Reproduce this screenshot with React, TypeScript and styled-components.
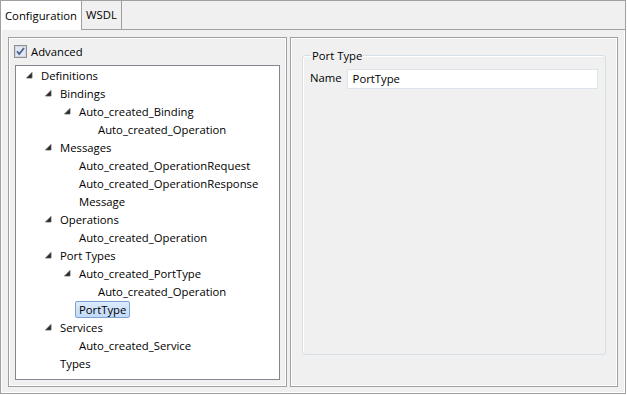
import styled, { createGlobalStyle } from "styled-components";

const GlobalStyle = createGlobalStyle`
  html, body {
    margin: 0;
    padding: 0;
    background: #ffffff;
  }
  body {
    font-family: "Open Sans", "Noto Sans", sans-serif;
    font-size: 11.3px;
    color: #000;
  }
`

interface TreeNode {
  label: string;
  level: number;
  open?: boolean;
  selected?: boolean;
}

const nodes: TreeNode[] = [
  { label: "Definitions", level: 0, open: true },
  { label: "Bindings", level: 1, open: true },
  { label: "Auto_created_Binding", level: 2, open: true },
  { label: "Auto_created_Operation", level: 3 },
  { label: "Messages", level: 1, open: true },
  { label: "Auto_created_OperationRequest", level: 2 },
  { label: "Auto_created_OperationResponse", level: 2 },
  { label: "Message", level: 2 },
  { label: "Operations", level: 1, open: true },
  { label: "Auto_created_Operation", level: 2 },
  { label: "Port Types", level: 1, open: true },
  { label: "Auto_created_PortType", level: 2, open: true },
  { label: "Auto_created_Operation", level: 3 },
  { label: "PortType", level: 2, selected: true },
  { label: "Services", level: 1, open: true },
  { label: "Auto_created_Service", level: 2 },
  { label: "Types", level: 1 },
]

const App = () => {
  return (
    <>
      <GlobalStyle />
      <Folder>
        <TabBar>
          <Tab active>Configuration</Tab>
          <Tab>WSDL</Tab>
        </TabBar>
        <Body>
          <LeftPanel>
            <CheckRow>
              <CheckBox>
                <svg width="13" height="13" viewBox="0 0 13 13">
                  <rect x="0.5" y="0.5" width="12" height="12" fill="#f4f4f4" stroke="#8e8f8f" />
                  <rect x="1.5" y="1.5" width="10" height="10" fill="#e2e8f2" stroke="#cfd6e2" />
                  <path d="M3 6.3 L5.2 9 L10 3" fill="none" stroke="#4a5f97" strokeWidth="1.8" />
                </svg>
              </CheckBox>
              <span>Advanced</span>
            </CheckRow>
            <TreeBox>
              {nodes.map((n, i) => (
                <Row key={i} level={n.level}>
                  <Expander>
                    {n.open && (
                      <svg width="7" height="7" viewBox="0 0 7 7">
                        <polygon points="6,0.5 6,6 0.5,6" fill="#262626" stroke="#595959" strokeWidth="0.8" />
                      </svg>
                    )}
                  </Expander>
                  <Label selected={n.selected}>{n.label}</Label>
                </Row>
              ))}
            </TreeBox>
          </LeftPanel>
          <RightPanel>
            <Group>
              <Legend>Port Type</Legend>
              <FieldRow>
                <FieldLabel>Name</FieldLabel>
                <TextField>PortType</TextField>
              </FieldRow>
            </Group>
          </RightPanel>
        </Body>
      </Folder>
    </>
  )
}

export default App;

const Folder = styled.div`
  width: 626px;
  height: 394px;
  display: flex;
  flex-direction: column;
  box-sizing: border-box;
`
const TabBar = styled.div`
  height: 30px;
  box-sizing: border-box;
  display: flex;
  align-items: flex-end;
  background: #f0f0f0;
  border-top: 1px solid #a0a0a0;
  border-right: 1px solid #a0a0a0;
  border-bottom: 1px solid #a0a0a0;
`
const Tab = styled.div<{ active?: boolean }>`
  height: ${p => (p.active ? "29px" : "28px")};
  margin-bottom: ${p => (p.active ? "-1px" : "0")};
  box-sizing: border-box;
  display: flex;
  align-items: center;
  padding: 0 4px 1px 4px;
  background: ${p => (p.active ? "#ffffff" : "#f0f0f0")};
  border-left: ${p => (p.active ? "1px solid #a0a0a0" : "none")};
  border-right: 1px solid #a0a0a0;
`
const Body = styled.div`
  flex: 1;
  display: flex;
  gap: 3px;
  padding: 7px 7px 6px 7px;
  box-sizing: border-box;
  background: #f0f0f0;
  border: 1px solid #a0a0a0;
  border-top: none;
  box-shadow: inset 1px 0 0 #ffffff, inset -1px -1px 0 #ffffff;
`
const Panel = styled.div`
  box-sizing: border-box;
  border: 1px solid #a0a0a0;
  box-shadow: inset 1px 1px 0 #ffffff, inset -1px -1px 0 #ffffff;
  display: flex;
  flex-direction: column;
`
const LeftPanel = styled(Panel)`
  width: 279px;
  padding: 6px 6px 6px 6px;
`
const RightPanel = styled(Panel)`
  flex: 1;
  padding: 10px 11px 31px 11px;
`
const CheckRow = styled.div`
  height: 14px;
  display: flex;
  align-items: center;
  gap: 4px;
  margin-bottom: 7px;
  margin-left: -1px;
`
const CheckBox = styled.span`
  display: flex;
  width: 13px;
  height: 13px;
`
const TreeBox = styled.div`
  flex: 1;
  background: #ffffff;
  border: 1px solid #828790;
`
const Row = styled.div<{ level: number }>`
  height: 18px;
  display: flex;
  align-items: center;
  padding-left: ${p => 6 + p.level * 19}px;
`
const Expander = styled.span`
  width: 19px;
  flex: none;
  display: flex;
  align-items: center;
  padding-left: 4px;
  box-sizing: border-box;
  svg {
    margin-top: 1px;
  }
`
const Label = styled.span<{ selected?: boolean }>`
  height: 17px;
  line-height: 15px;
  box-sizing: border-box;
  padding: 0 3px;
  margin-left: -4px;
  border: 1px solid ${p => (p.selected ? "#7da2ce" : "transparent")};
  border-radius: 2px;
  background: ${p => (p.selected ? "linear-gradient(#dcebfc, #c1dbfc)" : "transparent")};
  white-space: nowrap;
`
const Group = styled.fieldset`
  flex: 1;
  margin: 0;
  padding: 6px 7px 0 7px;
  border: 1px solid #d5dfe5;
  border-radius: 3px;
  box-shadow: inset 1px 1px 0 #ffffff;
  min-width: 0;
`
const Legend = styled.legend`
  padding: 0 1px;
  margin-left: 1px;
  line-height: 15px;
`
const FieldRow = styled.div`
  display: flex;
  align-items: center;
  gap: 5px;
`
const FieldLabel = styled.span`
  margin-bottom: 3px;
`
const TextField = styled.div`
  flex: 1;
  height: 20px;
  box-sizing: border-box;
  background: #ffffff;
  border: 1px solid #dde3ea;
  padding-left: 5px;
  line-height: 18px;
`
